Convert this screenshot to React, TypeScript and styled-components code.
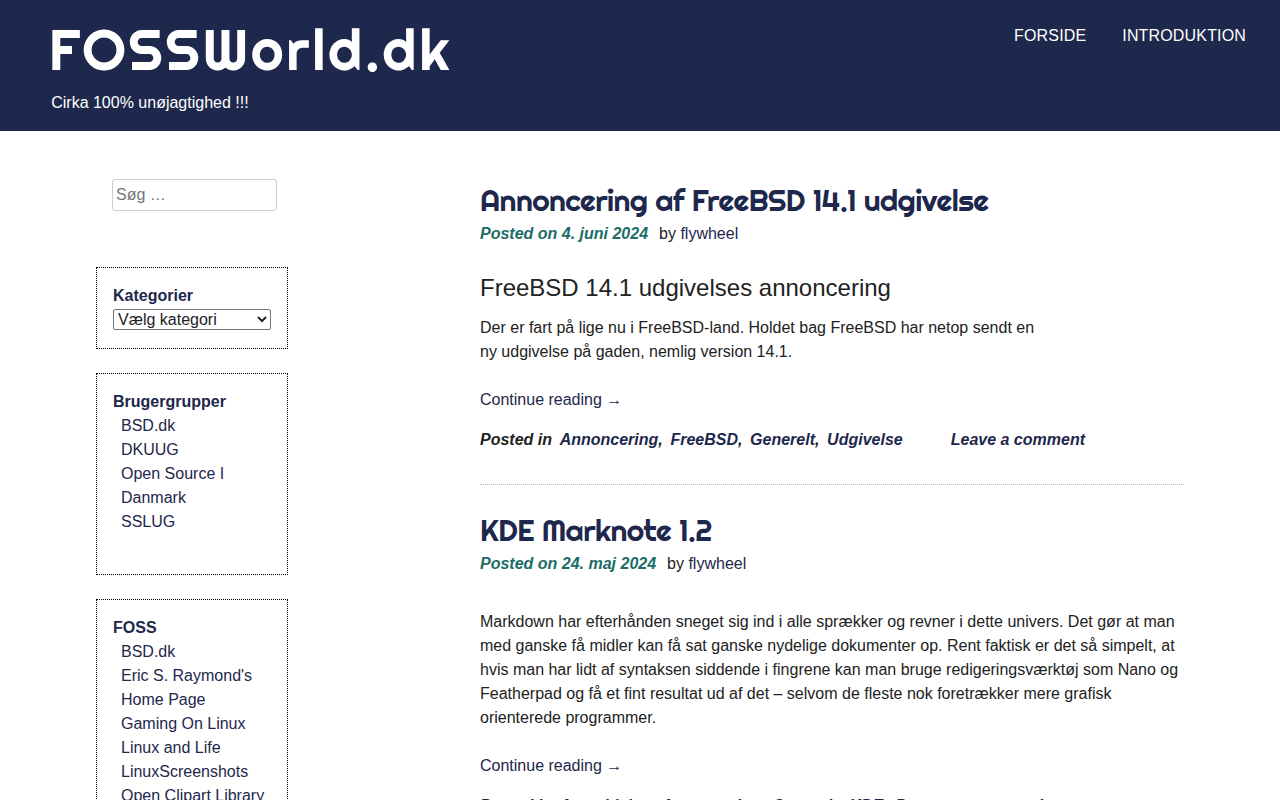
import { Fragment } from 'react'
import styled, { createGlobalStyle } from 'styled-components'

const navy = '#1e274c'

const GlobalStyle = createGlobalStyle`
  html {
    overflow: hidden;
  }

  body {
    margin: 0;
    height: 100vh;
    overflow: hidden;
    background: #fff;
    color: #222;
    font: 16px/24px 'Liberation Sans', Arial, sans-serif;
  }

  *, *::before, *::after {
    box-sizing: border-box;
  }

  a {
    color: ${navy};
    text-decoration: none;
  }
`

const HeaderStyles = styled.header`
  display: flex;
  justify-content: space-between;
  height: 131px;
  padding: 0 34px 0 51.2px;
  background: ${navy};
  color: #fff;
`

const SiteTitle = styled.h1`
  margin: 14px 0 0 -2.4px;
  font: 400 56px/72px Righteous, Lato, sans-serif;
  letter-spacing: 2.8px;
  white-space: nowrap;
`

const Tagline = styled.p`
  margin: 5px 0 0;
`

const NavStyles = styled.nav`
  display: flex;
  gap: 36px;
  padding-top: 24px;

  a {
    color: #fff;
    letter-spacing: 0.16px;
    text-transform: uppercase;
  }
`

const PageStyles = styled.div`
  display: grid;
  grid-template-columns: 192px 704px;
  column-gap: 192px;
  padding: 48px 96px 0;
`

const SearchInput = styled.input`
  display: block;
  width: 165px;
  height: 32px;
  margin: 0 0 56px 16px;
  padding: 3px;
  border: 1px solid #ccc;
  border-radius: 3px;
  font: inherit;

  &::placeholder {
    color: #757575;
  }
`

const Widget = styled.section`
  margin-bottom: 24px;
  padding: 16px 16px 18px;
  border: 1px dotted #000;

  h2 {
    margin: 0;
    color: ${navy};
    font-size: 16px;
    line-height: 24px;
  }
`

const CategorySelect = styled.select`
  display: block;
  width: 158px;
  height: 21px;
  margin-top: 1px;
  padding: 0;
  border: 1px solid #767676;
  border-radius: 2px;
  background: #fff;
  color: #222;
  font: inherit;
  line-height: normal;
`

const LinkList = styled.ul`
  margin: 0 0 22px;
  padding: 0 0 0 8px;
  list-style: none;
`

const PostStyles = styled.article`
  height: 306px;
  margin-bottom: 24px;
  border-bottom: 1px dotted #bbb;
`

const PostTitle = styled.h2`
  margin: 0 0 1px;
  color: ${navy};
  font: 400 30px/42px Righteous, Lato, sans-serif;
  letter-spacing: -0.02em;
  white-space: nowrap;
`

const Meta = styled.div`
  display: flex;
  gap: 11px;

  time {
    color: #1b6d66;
    font-weight: 700;
    font-style: italic;
  }
`

const Content = styled.div<{ $top: number; $width?: number }>`
  padding-top: ${({ $top }) => $top}px;

  h3 {
    margin: 0 0 10px;
    font-size: 24px;
    font-weight: 400;
    line-height: 36px;
  }

  p {
    max-width: ${({ $width }) => $width ?? 704}px;
    margin: 0 0 24px;
  }
`

const PostFooter = styled.footer`
  margin-top: 16px;
  font-weight: 700;
  font-style: italic;
  white-space: nowrap;

  a {
    margin-left: 7.65px;
  }

  a.comment {
    margin-left: 48px;
  }
`

interface PostProps {
  title: string
  date: string
  heading?: string
  text: string
  top: number
  width?: number
  tags: string[]
}

const posts: PostProps[] = [
  {
    title: 'Annoncering af FreeBSD 14.1 udgivelse',
    date: '4. juni 2024',
    heading: 'FreeBSD 14.1 udgivelses annoncering',
    text: 'Der er fart på lige nu i FreeBSD-land. Holdet bag FreeBSD har netop sendt en ny udgivelse på gaden, nemlig version 14.1.',
    top: 24,
    width: 570,
    tags: ['Annoncering', 'FreeBSD', 'Generelt', 'Udgivelse'],
  },
  {
    title: 'KDE Marknote 1.2',
    date: '24. maj 2024',
    text: 'Markdown har efterhånden sneget sig ind i alle sprækker og revner i dette univers. Det gør at man med ganske få midler kan få sat ganske nydelige dokumenter op. Rent faktisk er det så simpelt, at hvis man har lidt af syntaksen siddende i fingrene kan man bruge redigeringsværktøj som Nano og Featherpad og få et fint resultat ud af det – selvom de fleste nok foretrækker mere grafisk orienterede programmer.',
    top: 34,
    tags: ['Anmeldelse', 'Annoncering', 'Generelt', 'KDE', 'Programmer'],
  },
]

const linkGroups = [
  { title: 'Brugergrupper', links: ['BSD.dk', 'DKUUG', 'Open Source I Danmark', 'SSLUG'] },
  {
    title: 'FOSS',
    links: [
      'BSD.dk',
      "Eric S. Raymond's Home Page",
      'Gaming On Linux',
      'Linux and Life',
      'LinuxScreenshots',
      'Open Clipart Library',
    ],
  },
]

function Post({ title, date, heading, text, top, width, tags }: PostProps) {
  return (
    <PostStyles>
      <PostTitle>{title}</PostTitle>
      <Meta>
        <time>Posted on {date}</time>
        <span>
          by <a href='#'>flywheel</a>
        </span>
      </Meta>
      <Content $top={top} $width={width}>
        {heading && <h3>{heading}</h3>}
        <p>{text}</p>
        <a href='#'>Continue reading →</a>
      </Content>
      <PostFooter>
        Posted in
        {tags.map((tag, i) => (
          <Fragment key={tag}>
            <a href='#'>{tag}</a>
            {i < tags.length - 1 && ','}
          </Fragment>
        ))}
        <a className='comment' href='#'>
          Leave a comment
        </a>
      </PostFooter>
    </PostStyles>
  )
}

export default function App() {
  return (
    <>
      <GlobalStyle />
      <HeaderStyles>
        <div>
          <SiteTitle>FOSSWorld.dk</SiteTitle>
          <Tagline>Cirka 100% unøjagtighed !!!</Tagline>
        </div>
        <NavStyles>
          <a href='#'>Forside</a>
          <a href='#'>Introduktion</a>
        </NavStyles>
      </HeaderStyles>
      <PageStyles>
        <aside>
          <SearchInput type='search' placeholder='Søg …' />
          <Widget>
            <h2>Kategorier</h2>
            <CategorySelect>
              <option>Vælg kategori</option>
            </CategorySelect>
          </Widget>
          {linkGroups.map(({ title, links }) => (
            <Widget key={title}>
              <h2>{title}</h2>
              <LinkList>
                {links.map(link => (
                  <li key={link}>
                    <a href='#'>{link}</a>
                  </li>
                ))}
              </LinkList>
            </Widget>
          ))}
        </aside>
        <main>
          {posts.map(post => (
            <Post key={post.date} {...post} />
          ))}
        </main>
      </PageStyles>
    </>
  )
}
